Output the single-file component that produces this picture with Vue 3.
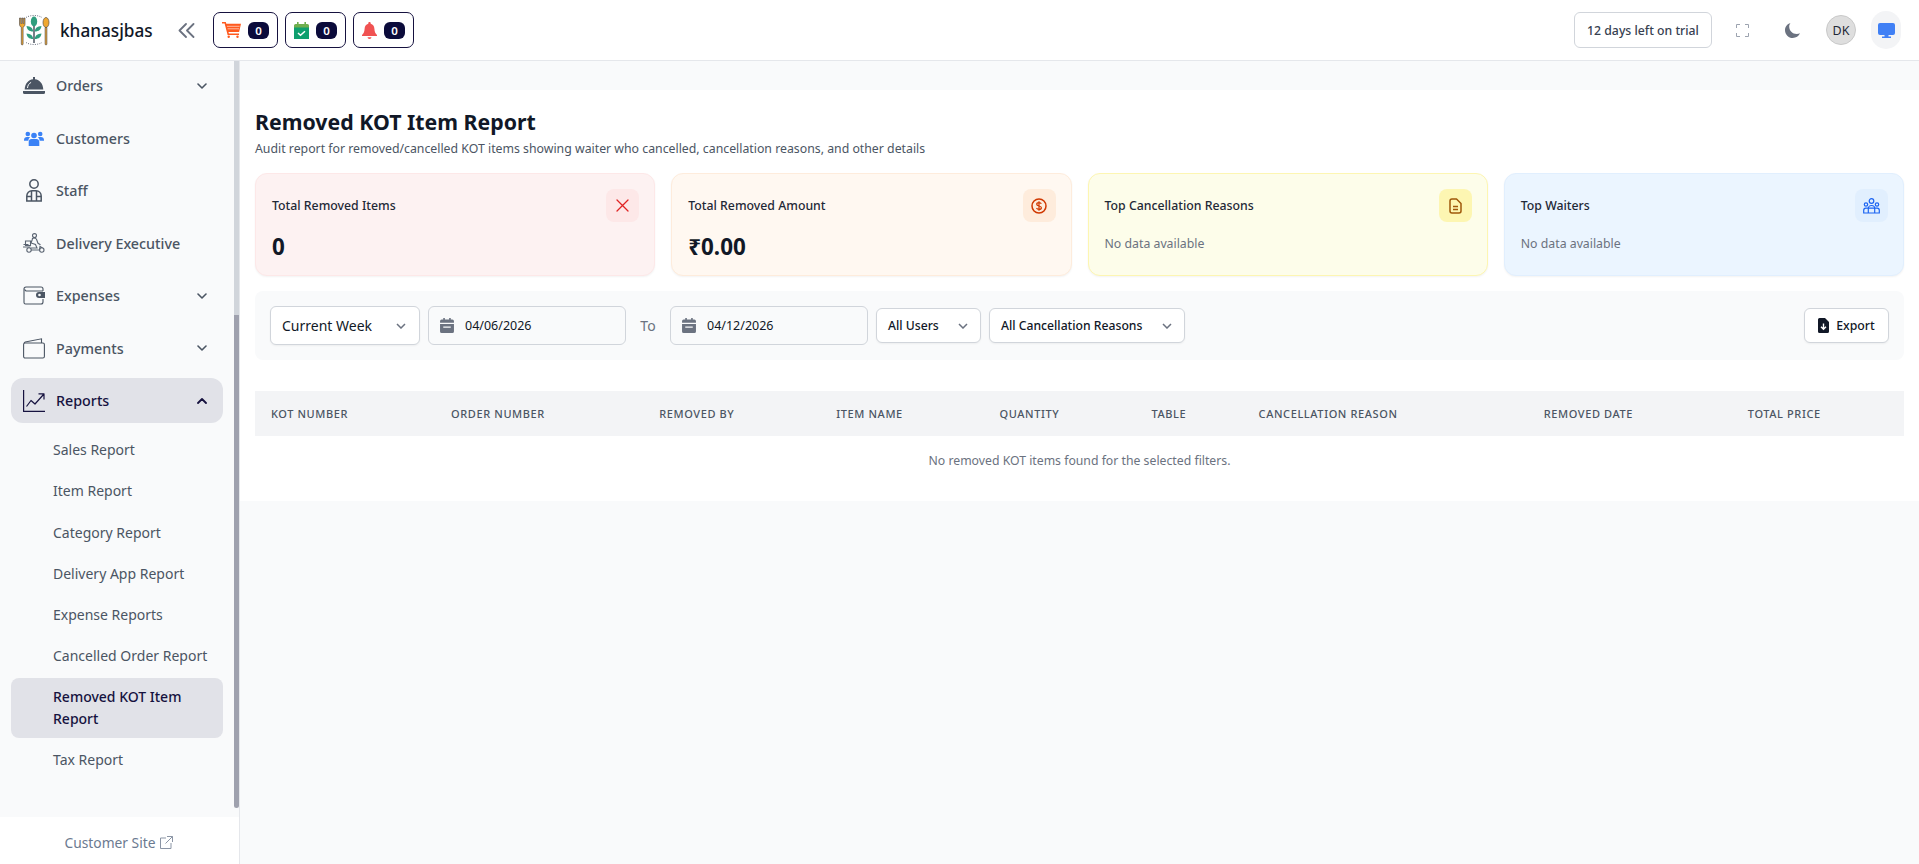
<script setup>
const badges = [
  { name: 'cart', count: 0 },
  { name: 'reservation', count: 0 },
  { name: 'bell', count: 0 },
]

const mainMenu = [
  { name: 'Orders', icon: 'orders', arrow: true },
  { name: 'Customers', icon: 'customers' },
  { name: 'Staff', icon: 'staff' },
  { name: 'Delivery Executive', icon: 'delivery' },
  { name: 'Expenses', icon: 'expenses', arrow: true },
  { name: 'Payments', icon: 'payments', arrow: true },
]

const reportLinks = [
  'Sales Report',
  'Item Report',
  'Category Report',
  'Delivery App Report',
  'Expense Reports',
  'Cancelled Order Report',
  'Removed KOT Item Report',
  'Tax Report',
]

const cards = [
  { title: 'Total Removed Items', value: '0', tone: 'red', icon: 'x' },
  { title: 'Total Removed Amount', value: '₹0.00', tone: 'orange', icon: 'money' },
  { title: 'Top Cancellation Reasons', empty: 'No data available', tone: 'yellow', icon: 'doc' },
  { title: 'Top Waiters', empty: 'No data available', tone: 'blue', icon: 'users' },
]

const columns = [
  { label: 'KOT Number', width: 180 },
  { label: 'Order Number', width: 208 },
  { label: 'Removed By', width: 177 },
  { label: 'Item Name', width: 163 },
  { label: 'Quantity', width: 152 },
  { label: 'Table', width: 107 },
  { label: 'Cancellation Reason', width: 285 },
  { label: 'Removed Date', width: 204 },
  { label: 'Total Price', width: 172 },
]

const dates = ['04/06/2026', '04/12/2026']
</script>

<template>
  <div class="page">
    <header class="topbar">
      <svg class="logo" viewBox="0 0 32 32" fill="none">
        <!-- dotted arcs above and below the plant -->
        <path d="M8 3.500C12.500.8 19.500.8 24 3.500M8 28.500c4.500 2.700 11.500 2.700 16 0" stroke="#6b7280" stroke-width="1" stroke-dasharray="1 1.300" />
        <!-- fork -->
        <path d="M1.500 4v6c0 1.800.8 2.800 1.800 3.200V30a.9.900 0 0 0 1.800 0V13.200C6 12.800 7 11.800 7 10V4H5.700v5.500H4.900V4H3.700v5.500h-.9V4z" fill="#f0a830" stroke="#3f3f46" stroke-width=".6" />
        <!-- spoon -->
        <ellipse cx="28" cy="8.500" rx="3" ry="5" fill="#f0a830" stroke="#3f3f46" stroke-width=".6" />
        <path d="M27.100 13.500h1.800V30a.9.900 0 0 1-1.800 0z" fill="#f0a830" stroke="#3f3f46" stroke-width=".6" />
        <!-- plant -->
        <path d="M16 8v21" stroke="#1f2937" stroke-width="1.200" />
        <ellipse cx="16" cy="7.500" rx="3.200" ry="5" fill="#2f9e7e" />
        <path d="M15.300 17.500c-4.500 0-6.300-2.200-6.800-5.500 4.200.2 6.300 2 6.800 5.500zM16.700 17.500c4.500 0 6.300-2.200 6.800-5.500-4.200.2-6.300 2-6.800 5.500zM15.300 25c-4.500 0-6.300-2.200-6.800-5.500 4.200.2 6.300 2 6.800 5.500zM16.700 25c4.500 0 6.300-2.200 6.800-5.500-4.200.2-6.300 2-6.800 5.500z" fill="#2f9e7e" />
      </svg>
      <span class="brand">khanasjbas</span>
      <svg class="collapse" viewBox="0 0 17 15" fill="none" stroke="#6b7280" stroke-width="1.800" stroke-linecap="round" stroke-linejoin="round">
        <path d="M8 1 1.500 7.500 8 14M15.500 1 9 7.500l6.500 6.500" />
      </svg>

      <div class="badges">
        <div v-for="badge in badges" :key="badge.name" class="badge-box">
          <svg v-if="badge.name === 'cart'" class="cart-icon" viewBox="0 0 19 16" fill="#ff5a1f">
            <path d="M0 0h3.800l.5 1.800H19l-1.900 8.200H6.500l.4 1.500H17V13H5.600L2.600 1.500H0z" />
            <path d="M5 4.300h12.600M5.600 6.800h11.500" stroke="#fff" stroke-width=".6" />
            <circle cx="6.700" cy="14.800" r="1.200" />
            <circle cx="15.500" cy="14.800" r="1.200" />
          </svg>
          <svg v-else-if="badge.name === 'reservation'" class="cal-icon" viewBox="0 0 15 17">
            <path d="M3 0h1.600v2h5.800V0H12v2h1.500A1.500 1.500 0 0 1 15 3.500V6H0V3.500A1.500 1.500 0 0 1 1.500 2H3z" fill="#6fae4e" />
            <path d="M0 5.500h15V17H0z" fill="#0e9f6e" />
            <path d="m4 11 2.500 2.300L11 9.200" fill="none" stroke="#fff" stroke-width="1.500" />
          </svg>
          <svg v-else class="cal-icon" viewBox="0 0 15 17" fill="#f05252">
            <path d="M7.500 0c.7 0 1.200.5 1.200 1.200v.6c2.300.5 3.600 2.500 3.700 5 .1 3 1 4.700 2.600 6.200v1H0v-1c1.600-1.500 2.500-3.200 2.600-6.200.1-2.500 1.400-4.500 3.700-5v-.6C6.300.5 6.800 0 7.500 0z" />
            <path d="M5.500 15.200h4a2 1.800 0 0 1-4 0z" />
          </svg>
          <span class="count">{{ badge.count }}</span>
        </div>
      </div>

      <div class="topbar-right">
        <div class="trial">12 days left on trial</div>
        <div class="icon-slot">
          <svg width="13" height="13" viewBox="0 0 13 13" fill="none" stroke="#9ca3af" stroke-width="1">
            <path d="M.5 4V.5H4M9 .5h3.500V4M12.500 9v3.500H9M4 12.500H.5V9" />
          </svg>
        </div>
        <div class="icon-slot">
          <svg width="15" height="15" viewBox="0 0 15 15" fill="#6b7280">
            <path d="M5.500 0C2.200.9 0 3.800 0 7.200 0 11.500 3.500 15 7.800 15c3.200 0 5.900-1.900 7.200-4.700-1 .5-2.100.7-3.300.7C7.500 11 4.200 7.700 4.200 3.500 4.200 2.200 4.700 1 5.500 0z" />
          </svg>
        </div>
        <div class="avatar">DK</div>
        <div class="screen-btn">
          <svg width="17" height="15" viewBox="0 0 17 15" fill="#4080f5">
            <path d="M2 0h13a2 2 0 0 1 2 2v8a2 2 0 0 1-2 2h-4.500v1.500H13V15H4v-1.500h2.500V12H2a2 2 0 0 1-2-2V2a2 2 0 0 1 2-2z" />
          </svg>
        </div>
      </div>
    </header>

    <div class="layout">
      <aside class="sidebar">
        <nav class="menu">
          <a v-for="item in mainMenu" :key="item.name" class="menu-row">
            <span class="menu-icon">
              <svg v-if="item.icon === 'orders'" width="22" height="17" viewBox="0 0 22 17" fill="#4b5563">
                <path d="M10 0h2v2.200c4.800.5 8 4.500 8.300 10.300H1.700C2 6.700 5.200 2.700 10 2.200z" />
                <path d="M0 14h22v1.500a1.500 1.500 0 0 1-1.500 1.500h-19A1.500 1.500 0 0 1 0 15.500z" />
                <path d="M4.500 11c.2-2.600 1.500-4.600 3.600-5.600" fill="none" stroke="#f9fafb" stroke-width="1" />
              </svg>
              <svg v-else-if="item.icon === 'customers'" width="20" height="15" viewBox="0 0 20 15" fill="#3b82f6">
                <circle cx="3.800" cy="3" r="2.300" />
                <circle cx="16.200" cy="3" r="2.300" />
                <circle cx="10" cy="4.500" r="2.800" />
                <path d="M0 9c0-1.800 1.200-3 3-3h2c.4 0 .7.100 1 .2C5 7 4.400 8.300 4.400 9.800H0zM14 6.200c.3-.1.600-.2 1-.2h2c1.800 0 3 1.200 3 3v.8h-4.400c0-1.500-.6-2.800-1.600-3.600zM7.500 8h5c1.600 0 2.800 1.200 2.800 2.800V15H4.700v-4.200C4.700 9.200 5.900 8 7.500 8z" />
              </svg>
              <svg v-else-if="item.icon === 'staff'" width="16" height="23" viewBox="0 0 16 23" fill="none" stroke="#4b5563" stroke-width="1.500">
                <circle cx="8" cy="5" r="4.200" />
                <path d="M.8 22v-5c0-3 2.300-5.300 5.200-5.300h4c2.900 0 5.200 2.300 5.200 5.300v5zM5.500 12v10M10.500 12v10M.8 17.500h4.700M10.500 17.500h4.700" />
              </svg>
              <svg v-else-if="item.icon === 'delivery'" width="22" height="20" viewBox="0 0 22 20" fill="none" stroke="#5b6472" stroke-width="1.100">
                <circle cx="11.500" cy="2.600" r="2" />
                <path d="M9 5.800c1.500-1 3.500-1 4.500.5l1.500 4 2.500 1.500M9.500 6 8 10l4.500 1.500 1.500 3.500H8" />
                <path d="M2.500 8h5v4.500h-5zM.5 11.500h5M0 14h7.500" />
                <circle cx="6" cy="17" r="2.200" />
                <circle cx="18.800" cy="17" r="2.200" />
                <path d="M8 17h8.500l.5-3.500 2.500 1.500" />
              </svg>
              <svg v-else-if="item.icon === 'expenses'" width="22" height="19" viewBox="0 0 22 19" fill="none" stroke="#4b5563" stroke-width="1.100">
                <path d="M20 5V3a2 2 0 0 0-2-2H3a2 2 0 0 0-2 2v13.500A1.500 1.500 0 0 0 2.500 18H18a2 2 0 0 0 2-2v-3" />
                <path d="M1.500 3.500 3 5h17" />
                <path d="M16 6h6v6h-6a3 3 0 0 1 0-6z" fill="#4b5563" stroke="none" />
                <circle cx="16.500" cy="9" r="1.300" fill="#f9fafb" stroke="none" />
              </svg>
              <svg v-else-if="item.icon === 'payments'" width="22" height="21" viewBox="0 0 22 21" fill="none" stroke="#4b5563" stroke-width="1.100">
                <rect x=".6" y="5" width="20.800" height="15" rx="1.500" />
                <path d="M1.200 5.200c0-.6.300-1 1-1.200L18.500.8v4.200" />
              </svg>
            </span>
            <span class="menu-name">{{ item.name }}</span>
            <svg v-if="item.arrow" class="arrow" viewBox="0 0 10 6" fill="none" stroke="#4b5563" stroke-width="1.600" stroke-linecap="round" stroke-linejoin="round">
              <path d="m1 1 4 4 4-4" />
            </svg>
          </a>

          <a class="menu-row menu-row-active">
            <span class="menu-icon">
              <svg width="22" height="22" viewBox="0 0 22 22" fill="none" stroke="#16123f" stroke-width="1.200" stroke-linejoin="round">
                <path d="M.6 0v21.400H22" />
                <path d="m3.500 16.500 4.500-6 4 3.500 8.500-9.500M15.500 3.800h5.500v5.700" />
              </svg>
            </span>
            <span class="menu-name">Reports</span>
            <svg class="arrow" viewBox="0 0 10 6" fill="none" stroke="#16123f" stroke-width="1.800" stroke-linecap="round" stroke-linejoin="round">
              <path d="m1 5 4-4 4 4" />
            </svg>
          </a>

          <a
            v-for="link in reportLinks"
            :key="link"
            class="sub-row"
            :class="{ 'sub-row-active': link === 'Removed KOT Item Report' }"
          >{{ link }}</a>
        </nav>

        <div class="scroll-track"></div>
        <div class="scroll-thumb"></div>

        <div class="site-link">
          Customer Site
          <svg width="13" height="13" viewBox="0 0 13 13" fill="none" stroke="#8b95a5" stroke-width="1">
            <path d="M6 2H.5v10.500H11V7M7 .5h5.500V6M12.500.5 5.500 7.500" />
          </svg>
        </div>
      </aside>

      <main class="content">
        <section class="panel">
          <h1>Removed KOT Item Report</h1>
          <p class="subtitle">Audit report for removed/cancelled KOT items showing waiter who cancelled, cancellation reasons, and other details</p>

          <div class="cards">
            <div v-for="card in cards" :key="card.title" class="card" :class="'card-' + card.tone">
              <div class="card-top">
                <span class="card-title">{{ card.title }}</span>
                <span class="card-icon">
                  <svg v-if="card.icon === 'x'" width="15" height="15" viewBox="0 0 15 15" fill="none" stroke="#e02424" stroke-width="1.300" stroke-linecap="round">
                    <path d="m2 2 11 11M13 2 2 13" />
                  </svg>
                  <svg v-else-if="card.icon === 'money'" width="16" height="16" viewBox="0 0 16 16" fill="none" stroke="#d03801" stroke-width="1.500">
                    <circle cx="8" cy="8" r="7" />
                    <path d="M10.300 5.800C10 5 9.200 4.600 8 4.600c-1.400 0-2.300.7-2.300 1.700 0 2.300 4.700 1.100 4.700 3.400 0 1-.9 1.700-2.400 1.700-1.300 0-2.100-.5-2.500-1.300M8 3.300v9.400" stroke-width="1.200" />
                  </svg>
                  <svg v-else-if="card.icon === 'doc'" width="13" height="16" viewBox="0 0 13 16" fill="none" stroke="#9f580a" stroke-width="1.500" stroke-linejoin="round">
                    <path d="M7.500 1H3a2 2 0 0 0-2 2v10a2 2 0 0 0 2 2h7a2 2 0 0 0 2-2V5.500zM4 8.500h5M4 11.500h5" />
                  </svg>
                  <svg v-else width="17" height="16" viewBox="0 0 17 16" fill="none" stroke="#1c64f2" stroke-width="1.200">
                    <circle cx="8.500" cy="3" r="2.300" />
                    <circle cx="3" cy="6.500" r="1.700" />
                    <circle cx="14" cy="6.500" r="1.700" />
                    <path d="M.7 15v-2.800c0-1.200.9-2.100 2.100-2.100h11.400c1.200 0 2.100.9 2.100 2.100V15zM5.300 15v-4.500c0-1.700 1.400-3 3.200-3s3.200 1.300 3.200 3V15" />
                  </svg>
                </span>
              </div>
              <div v-if="card.value" class="card-value">{{ card.value }}</div>
              <div v-else class="card-empty">{{ card.empty }}</div>
            </div>
          </div>

          <div class="filters">
            <div class="select select-period">
              <span>Current Week</span>
              <svg class="select-arrow" viewBox="0 0 10 6" fill="none" stroke="#6b7280" stroke-width="1.500">
                <path d="m1 1 4 4 4-4" />
              </svg>
            </div>

            <template v-for="(date, i) in dates" :key="date">
              <span v-if="i === 1" class="to">To</span>
              <div class="date">
                <svg width="14" height="15" viewBox="0 0 13 14" fill="#6b7280">
                  <path d="M3 0h1.500v1.500h4V0H10v1.500h1.500A1.500 1.500 0 0 1 13 3v1.500H0V3a1.500 1.500 0 0 1 1.500-1.500H3z" />
                  <path d="M0 5.500h13v7a1.500 1.500 0 0 1-1.500 1.500h-10A1.500 1.500 0 0 1 0 12.500zm3 2.500v1h7V8z" fill-rule="evenodd" />
                </svg>
                <span>{{ date }}</span>
              </div>
            </template>

            <div class="select select-small select-users">
              <span>All Users</span>
              <svg class="select-arrow" viewBox="0 0 10 6" fill="none" stroke="#6b7280" stroke-width="1.500">
                <path d="m1 1 4 4 4-4" />
              </svg>
            </div>
            <div class="select select-small select-reasons">
              <span>All Cancellation Reasons</span>
              <svg class="select-arrow" viewBox="0 0 10 6" fill="none" stroke="#6b7280" stroke-width="1.500">
                <path d="m1 1 4 4 4-4" />
              </svg>
            </div>

            <button class="export">
              <svg width="11" height="15" viewBox="0 0 11 15" fill="#111827">
                <path d="M1.500 0H7l4 4v9.500a1.500 1.500 0 0 1-1.500 1.500h-8A1.500 1.500 0 0 1 0 13.500v-12A1.500 1.500 0 0 1 1.500 0z" />
                <path d="M5.500 5.500v5.500M3 8.800l2.500 2.500L8 8.800" fill="none" stroke="#fff" stroke-width="1.400" />
              </svg>
              Export
            </button>
          </div>

          <table class="report-table">
            <thead>
              <tr>
                <th v-for="col in columns" :key="col.label" :style="{ width: col.width + 'px' }">{{ col.label }}</th>
              </tr>
            </thead>
            <tbody>
              <tr>
                <td :colspan="columns.length">No removed KOT items found for the selected filters.</td>
              </tr>
            </tbody>
          </table>
        </section>
      </main>
    </div>
  </div>
</template>

<style>
html, body {
  margin: 0;
  background: #f9fafb;
}
</style>

<style scoped>
.page {
  height: 864px;
  display: flex;
  flex-direction: column;
  overflow: hidden;
  font-family: "Noto Sans", "Liberation Sans", sans-serif;
  color: #111827;
}

/* top bar */
.topbar {
  height: 60px;
  flex: none;
  display: flex;
  align-items: center;
  padding: 0 18px;
  background: #fff;
  border-bottom: 1px solid #e5e7eb;
}

.logo {
  width: 32px;
  height: 32px;
  flex: none;
}

.brand {
  width: 92px;
  margin-left: 10px;
  font-size: 17.200px;
  font-weight: 500;
  color: #111827;
}

.collapse {
  width: 17px;
  height: 15px;
  margin-left: 26px;
}

.badges {
  display: flex;
  gap: 7px;
  margin-left: 18px;
}

.badge-box {
  height: 36px;
  box-sizing: border-box;
  display: flex;
  align-items: center;
  gap: 7px;
  padding: 0 8px;
  border: 1px solid #16123f;
  border-radius: 7px;
}

.cart-icon {
  width: 19px;
  height: 16px;
}

.cal-icon {
  width: 15px;
  height: 17px;
}

.count {
  width: 21px;
  height: 17px;
  display: flex;
  align-items: center;
  justify-content: center;
  background: #0b0b3b;
  border-radius: 6px;
  color: #fff;
  font-size: 11.500px;
  font-weight: 600;
}

.topbar-right {
  margin-left: auto;
  display: flex;
  align-items: center;
}

.trial {
  width: 138px;
  height: 36px;
  box-sizing: border-box;
  display: flex;
  align-items: center;
  justify-content: center;
  border: 1px solid #d1d5db;
  border-radius: 6px;
  font-size: 12.250px;
  font-weight: 500;
  color: #374151;
}

.icon-slot {
  width: 40px;
  height: 36px;
  margin-left: 10px;
  display: flex;
  align-items: center;
  justify-content: center;
}

.avatar {
  width: 30px;
  height: 30px;
  box-sizing: border-box;
  margin-left: 14px;
  display: flex;
  align-items: center;
  justify-content: center;
  border: 1px solid #c9c9c9;
  border-radius: 50%;
  background: #dedede;
  font-size: 12.500px;
  color: #1f2937;
}

.screen-btn {
  width: 30px;
  height: 38px;
  margin-left: 15px;
  display: flex;
  align-items: center;
  justify-content: center;
  background: #f3f4f6;
  border-radius: 15px;
}

.layout {
  flex: 1;
  min-height: 0;
  display: flex;
}

/* sidebar */
.sidebar {
  position: relative;
  width: 240px;
  flex: none;
  box-sizing: border-box;
  display: flex;
  flex-direction: column;
  background: #f9fafb;
  border-right: 1px solid #e5e7eb;
}

.menu {
  flex: 1;
  display: flex;
  flex-direction: column;
  padding-top: 2px;
  overflow: hidden;
}

.menu-row {
  height: 45px;
  flex: none;
  width: 212px;
  box-sizing: border-box;
  margin: 0 0 7.5px 11px;
  padding: 0 16px 0 12px;
  display: flex;
  align-items: center;
  border-radius: 12px;
  font-size: 14.300px;
  font-weight: 500;
  color: #4b5563;
}

.menu-row-active {
  margin-bottom: 8px;
  background: #e1e2e8;
  color: #16123f;
}

.menu-icon {
  width: 22px;
  height: 24px;
  display: flex;
  align-items: center;
  justify-content: center;
  margin-right: 11px;
  flex: none;
}

.menu-name {
  flex: 1;
}

.arrow {
  width: 10px;
  height: 6px;
}

.sub-row {
  flex: none;
  width: 212px;
  box-sizing: border-box;
  margin: 0 0 3.3px 11px;
  padding: 8px 12px 8px 42px;
  border-radius: 8px;
  font-size: 14px;
  line-height: 22px;
  color: #4b5563;
}

.sub-row-active {
  margin-top: -1px;
  background: #e1e2e8;
  color: #16123f;
  font-weight: 500;
}

.scroll-track {
  position: absolute;
  top: 0;
  right: 0;
  width: 5px;
  height: 254px;
  background: #d1d5db;
}

.scroll-thumb {
  position: absolute;
  top: 254px;
  right: 0;
  width: 5px;
  height: 493px;
  border-radius: 0 0 3px 3px;
  background: #9fa1ae;
}

.site-link {
  height: 47px;
  flex: none;
  display: flex;
  align-items: center;
  justify-content: center;
  gap: 4px;
  box-sizing: border-box;
  padding: 10px 2px 6px 0;
  background: #fff;
  font-size: 13.800px;
  color: #6b7a90;
}

/* report */
.content {
  flex: 1;
  min-width: 0;
  padding-top: 29px;
}

.panel {
  padding: 18px 15px 16px;
  background: #fff;
}

h1 {
  margin: 0;
  font-size: 21.300px;
  line-height: 28px;
  font-weight: 700;
  color: #111827;
}

.subtitle {
  margin: 4px 0 0;
  font-size: 12.300px;
  line-height: 18px;
  color: #4b5563;
}

.cards {
  display: grid;
  grid-template-columns: repeat(4, 1fr);
  gap: 16px;
  margin-top: 15px;
}

.card {
  box-sizing: border-box;
  padding: 15px 15px 12px 16px;
  border: 1px solid;
  border-radius: 12px;
  box-shadow: 0 1px 2px rgba(0, 0, 0, 0.05);
}

.card-red { background: #fdf2f2; border-color: #fde8e8; }
.card-orange { background: #fff8f1; border-color: #feecdc; }
.card-yellow { background: #fdfdea; border-color: #fdf6b2; }
.card-blue { background: #ebf5ff; border-color: #e1effe; }

.card-red .card-icon { background: #fde8e8; }
.card-orange .card-icon { background: #feecdc; }
.card-yellow .card-icon { background: #fdf6b2; }
.card-blue .card-icon { background: #e1effe; }

.card-top {
  display: flex;
  align-items: center;
  justify-content: space-between;
}

.card-title {
  font-size: 12.300px;
  font-weight: 500;
  color: #1f2937;
}

.card-icon {
  width: 33px;
  height: 33px;
  display: flex;
  align-items: center;
  justify-content: center;
  border-radius: 8px;
}

.card-value {
  margin-top: 9px;
  font-size: 22.400px;
  line-height: 32px;
  font-weight: 700;
  color: #111827;
}

.card-empty {
  margin-top: 13px;
  font-size: 12.300px;
  line-height: 18px;
  color: #6b7280;
}

.filters {
  height: 69px;
  box-sizing: border-box;
  margin-top: 15px;
  padding: 0 15px;
  display: flex;
  align-items: center;
  gap: 8px;
  background: #f9fafb;
  border-radius: 8px;
}

.select {
  box-sizing: border-box;
  display: flex;
  align-items: center;
  justify-content: space-between;
  background: #fff;
  border: 1px solid #d1d5db;
  border-radius: 6px;
  box-shadow: 0 1px 2px rgba(0, 0, 0, 0.05);
  color: #111827;
}

.select-period {
  width: 150px;
  height: 39px;
  padding: 0 13px 0 11px;
  font-size: 14px;
}

.select-small {
  height: 35px;
  padding: 0 12px 0 11px;
  font-size: 12.200px;
  font-weight: 500;
}

.select-users { width: 105px; }
.select-reasons { width: 196px; }

.select-arrow {
  width: 10px;
  height: 6px;
}

.date {
  width: 198px;
  height: 39px;
  box-sizing: border-box;
  padding-left: 11px;
  display: flex;
  align-items: center;
  gap: 11px;
  background: #f9fafb;
  border: 1px solid #d1d5db;
  border-radius: 6px;
  font-size: 12.500px;
  color: #111827;
}

.to {
  width: 28px;
  text-align: center;
  font-size: 14px;
  color: #6b7280;
}

.export {
  margin-left: auto;
  width: 85px;
  height: 35px;
  box-sizing: border-box;
  display: flex;
  align-items: center;
  justify-content: center;
  gap: 7px;
  background: #fff;
  border: 1px solid #d1d5db;
  border-radius: 6px;
  box-shadow: 0 1px 2px rgba(0, 0, 0, 0.05);
  font-family: inherit;
  font-size: 12.300px;
  font-weight: 500;
  color: #111827;
}

.report-table {
  width: 100%;
  margin-top: 31px;
  border-collapse: collapse;
  table-layout: fixed;
}

.report-table th {
  height: 45px;
  box-sizing: border-box;
  padding: 0 0 0 16px;
  text-align: left;
  background: #f3f4f6;
  font-size: 11px;
  font-weight: 500;
  letter-spacing: 0.6px;
  text-transform: uppercase;
  color: #4b5563;
}

.report-table td {
  height: 49px;
  padding: 0;
  text-align: center;
  font-size: 12.250px;
  color: #6b7280;
}
</style>
